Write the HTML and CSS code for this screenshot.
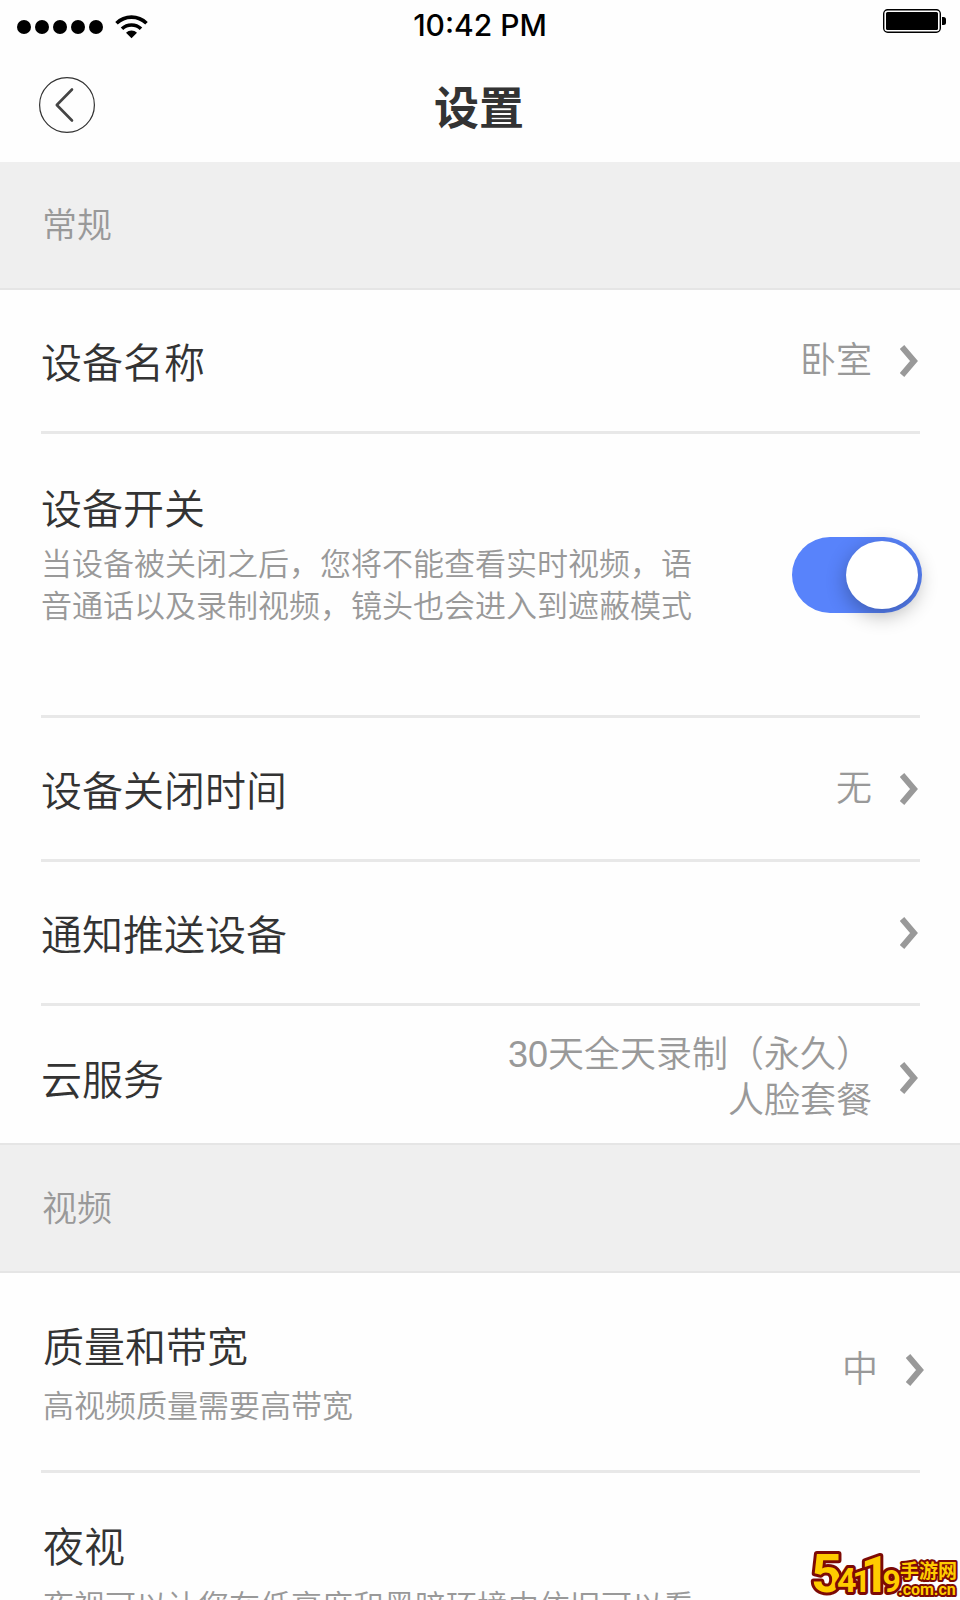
FILE: index.html
```html
<!DOCTYPE html>
<html lang="zh-CN">
<head>
    <meta charset="UTF-8">
    <meta name="viewport" content="width=device-width, initial-scale=1.0">
    <title>设置</title>
    <link rel="stylesheet" href="styles.css">
</head>
<body>
    <!-- 状态栏 -->
    <div class="status-bar">
        <div class="signal">
            <span class="dot"></span>
            <span class="dot"></span>
            <span class="dot"></span>
            <span class="dot"></span>
            <span class="dot"></span>
            <svg class="wifi" width="33" height="24" viewBox="0 0 33 24">
                <path d="M1.5 8.2 A21.5 21.5 0 0 1 31.5 8.2" fill="none" stroke="#000" stroke-width="3.6"/>
                <path d="M7 13.8 A13.8 13.8 0 0 1 26 13.8" fill="none" stroke="#000" stroke-width="3.6"/>
                <path d="M11 17.8 A8 8 0 0 1 22 17.8 L16.5 23.2 Z"/>
            </svg>
        </div>
        <div class="time">10:42 PM</div>
        <div class="power">
            <svg class="battery" width="63" height="24" viewBox="0 0 63 24">
                <rect x="0.7" y="0.7" width="56.6" height="22.6" rx="4" fill="none" stroke="#000" stroke-width="1.4"/>
                <rect x="3" y="3" width="52" height="18" rx="1.5"/>
                <path d="M59 8 h1.5 a2.5 2.5 0 0 1 2.5 2.5 v3 a2.5 2.5 0 0 1 -2.5 2.5 h-1.5 z"/>
            </svg>
        </div>
    </div>

    <header class="header">
        <button class="back" aria-label="返回">
            <svg width="56" height="56" viewBox="0 0 56 56">
                <circle cx="28" cy="28" r="27.4" fill="none" stroke="#333" stroke-width="1.2"/>
                <path d="M33 12.5 L17.8 28 L33 43.5" fill="none" stroke="#444" stroke-width="2.6" stroke-linecap="round" stroke-linejoin="round"/>
            </svg>
        </button>
        <h1>设置</h1>
    </header>

    <main>
        <h2 class="section">常规</h2>
        <div class="group">
            <a class="row" href="#">
                <span class="label">设备名称</span>
                <span class="value">卧室</span>
                <svg class="arrow" width="18" height="32" viewBox="0 0 18 32"><path d="M2 2 L14 16 L2 30"/></svg>
            </a>
            <div class="row row-switch">
                <div class="text">
                    <label class="label" for="power">设备开关</label>
                    <p class="desc">当设备被关闭之后，您将不能查看实时视频，语音通话以及录制视频，镜头也会进入到遮蔽模式</p>
                </div>
                <input class="switch" type="checkbox" id="power" checked>
            </div>
            <a class="row" href="#">
                <span class="label">设备关闭时间</span>
                <span class="value">无</span>
                <svg class="arrow" width="18" height="32" viewBox="0 0 18 32"><path d="M2 2 L14 16 L2 30"/></svg>
            </a>
            <a class="row" href="#">
                <span class="label">通知推送设备</span>
                <svg class="arrow" width="18" height="32" viewBox="0 0 18 32"><path d="M2 2 L14 16 L2 30"/></svg>
            </a>
            <a class="row row-cloud" href="#">
                <span class="label">云服务</span>
                <span class="value">30天全天录制（永久）<br>人脸套餐</span>
                <svg class="arrow" width="18" height="32" viewBox="0 0 18 32"><path d="M2 2 L14 16 L2 30"/></svg>
            </a>
        </div>

        <h2 class="section section-video">视频</h2>
        <div class="group group-video">
            <a class="row row-detail" href="#">
                <span class="text">
                    <span class="label">质量和带宽</span>
                    <span class="desc">高视频质量需要高带宽</span>
                </span>
                <span class="value">中</span>
                <svg class="arrow" width="18" height="32" viewBox="0 0 18 32"><path d="M2 2 L14 16 L2 30"/></svg>
            </a>
            <div class="row row-detail">
                <div class="text">
                    <span class="label">夜视</span>
                    <p class="desc">夜视可以让您在低亮度和黑暗环境中依旧可以看</p>
                </div>
            </div>
        </div>
    </main>

    <!-- 角标 -->
    <svg class="badge" width="150" height="54" viewBox="0 0 150 54">
        <text class="badge-num" x="1" y="46" font-size="54">5<tspan dx="-5" font-size="34">4</tspan><tspan dx="-4" font-size="32">1</tspan><tspan dx="-10" font-size="50">1</tspan><tspan dx="-7" font-size="32">9</tspan></text>
        <text class="badge-name" x="90" y="32" font-size="19">手游网</text>
        <text class="badge-name" x="88" y="49" font-size="16">.com.cn</text>
    </svg>
</body>
</html>
```

FILE: styles.css
```css
* {
    box-sizing: border-box;
}

body {
    font-family: "Liberation Sans", "Noto Sans CJK SC", sans-serif;
    margin: 0;
    height: 100vh;
    overflow: hidden;
    position: relative;
    background-color: #fefefe;
    color: #333;
}

h1, h2, p {
    margin: 0;
}

/* status bar */
.status-bar {
    display: grid;
    grid-template-columns: 1fr auto 1fr;
    height: 48px;
    padding: 0 14px;
    color: #000;
}
.signal {
    display: flex;
    align-items: center;
    gap: 4px;
    padding: 4px 0 0 3px;
}
.dot {
    width: 14px;
    height: 14px;
    border-radius: 50%;
    background-color: #000;
}
.wifi {
    margin-left: 8px;
}
.time {
    font-family: Inter, sans-serif;
    font-size: 30px;
    font-weight: 500;
    line-height: 50px;
}
.power {
    display: flex;
    justify-content: flex-end;
    padding-top: 9px;
}

/* header */
.header {
    display: grid;
    grid-template-columns: 1fr auto 1fr;
    align-items: center;
    height: 114px;
    padding: 0 41px 0 39px;
}
.header h1 {
    padding-top: 10px;
    font-size: 45px;
    font-weight: bold;
    line-height: 60px;
}
.back {
    width: 56px;
    height: 56px;
    padding: 0;
    border: none;
    background: none;
    cursor: pointer;
}
.back svg {
    display: block;
}

/* sections */
.section {
    height: 128px;
    padding-left: 42px;
    border-bottom: 2px solid #e5e5e5;
    background-color: #efefef;
    color: #999;
    font-size: 35px;
    font-weight: 350;
    line-height: 128px;
}
.section-video {
    height: 130px;
    border-top: 2px solid #e5e5e5;
}

/* rows */
.group {
    padding: 0 40px 0 41px;
}
.row {
    display: flex;
    align-items: center;
    min-height: 144px;
    border-bottom: 3px solid #e8e8e8;
    color: #333;
    font-weight: 350;
    text-decoration: none;
}
.label {
    display: block;
    padding-top: 6px;
    font-size: 41px;
    line-height: 60px;
}
.desc {
    display: block;
    color: #999;
    font-size: 31px;
    line-height: 42px;
}
.value {
    margin-left: auto;
    color: #999;
    font-size: 36px;
    line-height: 46px;
    text-align: right;
}
.arrow {
    flex: none;
    margin: 0 2px 0 28px;
}
.row > .label + .arrow {
    margin-left: auto;
}
.arrow path {
    fill: none;
    stroke: #999;
    stroke-width: 6;
}
.row-switch {
    min-height: 284px;
    justify-content: space-between;
}
.row-switch .text {
    align-self: flex-start;
    max-width: 654px;
    padding-top: 40px;
}
.row-switch .desc {
    margin-top: 4px;
}
.row-cloud {
    min-height: 137px;
    padding-top: 6px;
    border-bottom: none;
}
.row-detail {
    min-height: 200px;
    padding-bottom: 4px;
}
.row-detail .desc {
    margin-top: 8px;
}
.group-video .text {
    padding-left: 2px;
}
.group-video .arrow {
    margin-right: -4px;
}

/* switch */
.switch {
    appearance: none;
    flex: none;
    width: 130px;
    height: 76px;
    margin: 0 -2px 0 0;
    padding: 4px;
    border-radius: 38px;
    background-color: #ccc;
    cursor: pointer;
}
.switch::before {
    content: "";
    display: block;
    width: 72px;
    height: 68px;
    border-radius: 50%;
    background-color: #fff;
    box-shadow: 0 6px 20px rgba(0, 0, 0, 0.3);
}
.switch:checked {
    background-color: #5883fb;
}
.switch:checked::before {
    margin-left: 50px;
}

/* site badge */
.badge {
    position: absolute;
    right: 0;
    bottom: 0;
}
.badge text {
    font-family: Roboto, "Noto Sans CJK SC", sans-serif;
    font-weight: bold;
    fill: #fc0;
    stroke: #7d0a05;
    stroke-width: 6;
    stroke-linejoin: round;
    paint-order: stroke;
}
.badge .badge-name {
    stroke-width: 4;
}
```
